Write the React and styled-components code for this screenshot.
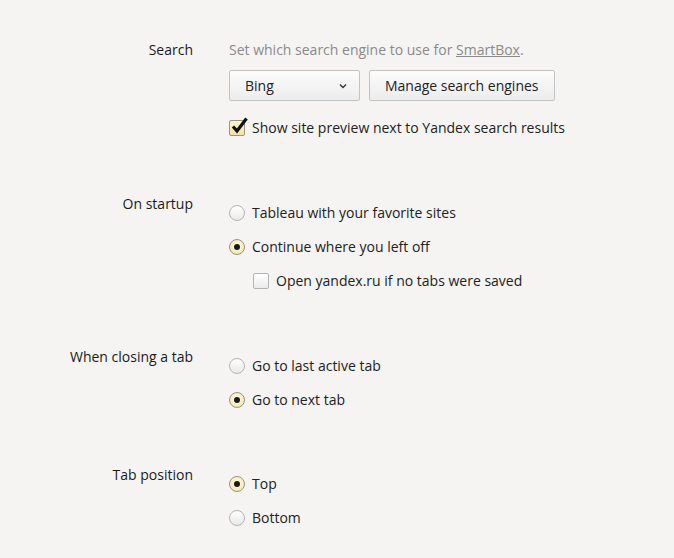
import React from "react";
import styled, { createGlobalStyle } from "styled-components";

const Global = createGlobalStyle`
  html, body { margin: 0; padding: 0; background: #f5f4f2; }
  body { font-family: "Open Sans", "Noto Sans", sans-serif; font-size: 14px; color: #222; }
`;

const Page = styled.div`
  padding: 40px 0 30px;
  display: flex;
  flex-direction: column;
  gap: 56px;
`;

const Section = styled.section`
  display: grid;
  grid-template-columns: 193px 1fr;
  column-gap: 36px;
  align-items: start;
  &:last-child { margin-top: -1px; }
`;

const Label = styled.div`
  text-align: right;
  line-height: 20px;
  color: #1a1a1a;
`;

const Content = styled.div`
  display: flex;
  flex-direction: column;
  gap: ${(p) => p.$gap || 14}px;
  padding-top: ${(p) => p.$pad || 0}px;
`;

const Desc = styled.div`
  line-height: 20px;
  color: #8a8a8a;
  a { color: #8a8a8a; text-decoration: underline; }
`;

const Controls = styled.div`
  display: flex;
  gap: 9px;
  margin-top: -4px;
`;

const Btn = styled.div`
  box-sizing: border-box;
  height: 31px;
  display: flex;
  align-items: center;
  justify-content: space-between;
  padding: 0 ${(p) => (p.$select ? "12px 0 15px" : "15px")};
  width: ${(p) => (p.$select ? "131px" : "auto")};
  border: 1px solid #c3c3c3;
  border-radius: 2px;
  background: linear-gradient(#fcfcfc, #ececec);
  color: #222;
`;

const Option = styled.label`
  display: flex;
  align-items: center;
  gap: 7px;
  line-height: 20px;
  margin-left: ${(p) => (p.$indent ? "24px" : "0")};
  margin-top: ${(p) => p.$mt || 0}px;
  color: #222;
`;

const Radio = styled.span`
  box-sizing: border-box;
  width: 16px;
  height: 16px;
  border-radius: 50%;
  border: 1px solid ${(p) => (p.$on ? "#9a9480" : "#b4b4b4")};
  background: ${(p) =>
    p.$on
      ? "radial-gradient(circle at 50% 40%, #fffbe6, #f1e2a8)"
      : "linear-gradient(#ffffff, #e9e9e9)"};
  display: flex;
  align-items: center;
  justify-content: center;
  flex: none;
  &::after {
    content: "";
    width: 6px;
    height: 6px;
    border-radius: 50%;
    background: #1a1a1a;
    display: ${(p) => (p.$on ? "block" : "none")};
  }
`;

const Box = styled.span`
  position: relative;
  box-sizing: border-box;
  width: 16px;
  height: 16px;
  border-radius: 2px;
  border: 1px solid ${(p) => (p.$on ? "#9a9480" : "#b4b4b4")};
  background: ${(p) =>
    p.$on ? "linear-gradient(#fff6d2, #f0e2a6)" : "linear-gradient(#ffffff, #ebebeb)"};
  flex: none;
`;

const Tick = styled.svg`
  position: absolute;
  left: 1px;
  top: -4px;
`;

const Chevron = () => (
  <svg width="8" height="6" viewBox="0 0 8 6">
    <path d="M1 1.5 L4 4.5 L7 1.5" fill="none" stroke="#333" strokeWidth="1.4" />
  </svg>
);

const RadioOpt = ({ on, children }) => (
  <Option>
    <Radio $on={on} />
    {children}
  </Option>
);

export default function App() {
  return (
    <>
      <Global />
      <Page>
        <Section>
          <Label>Search</Label>
          <Content $gap={14}>
            <Desc>
              Set which search engine to use for <a>SmartBox</a>.
            </Desc>
            <Controls>
              <Btn $select>
                Bing
                <Chevron />
              </Btn>
              <Btn>Manage search engines</Btn>
            </Controls>
            <Option $mt={3}>
              <Box $on>
                <Tick width="17" height="17" viewBox="0 0 17 17">
                  <path d="M2 9.5 L6 14 L15.5 1.5" fill="none" stroke="#111" strokeWidth="3.2" strokeLinejoin="miter" />
                </Tick>
              </Box>
              Show site preview next to Yandex search results
            </Option>
          </Content>
        </Section>

        <Section>
          <Label>On startup</Label>
          <Content $pad={9}>
            <RadioOpt>Tableau with your favorite sites</RadioOpt>
            <RadioOpt on>Continue where you left off</RadioOpt>
            <Option $indent>
              <Box />
              Open yandex.ru if no tabs were saved
            </Option>
          </Content>
        </Section>

        <Section>
          <Label>When closing a tab</Label>
          <Content $pad={9}>
            <RadioOpt>Go to last active tab</RadioOpt>
            <RadioOpt on>Go to next tab</RadioOpt>
          </Content>
        </Section>

        <Section>
          <Label>Tab position</Label>
          <Content $pad={9}>
            <RadioOpt on>Top</RadioOpt>
            <RadioOpt>Bottom</RadioOpt>
          </Content>
        </Section>
      </Page>
    </>
  );
}
